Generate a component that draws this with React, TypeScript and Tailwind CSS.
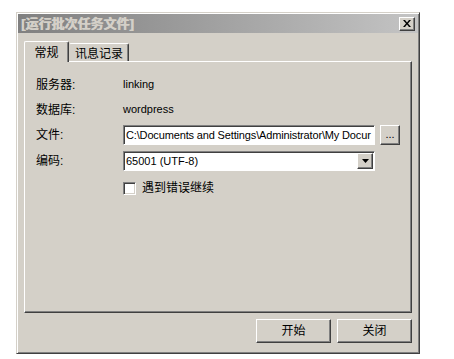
import React from "react";

const font = { fontFamily: '"Liberation Sans", "Noto Sans CJK SC", sans-serif' };

function Bevel({ children, className = "" }: { children?: React.ReactNode; className?: string }) {
    // classic raised 3D button look
    return (
        <div
            className={`bg-[#d4d0c8] border border-t-white border-l-white border-r-[#404040] border-b-[#404040] shadow-[inset_-1px_-1px_0_#808080] flex items-center justify-center ${className}`}
        >
            {children}
        </div>
    );
}

function Field({ children, className = "" }: { children?: React.ReactNode; className?: string }) {
    // sunken edit box
    return (
        <div
            className={`bg-white border border-t-[#808080] border-l-[#808080] border-r-white border-b-white shadow-[inset_1px_1px_0_#404040] flex items-center ${className}`}
        >
            {children}
        </div>
    );
}

export default function App() {
    return (
        <div className="w-[454px] h-[359px] bg-white pl-[16px] pt-[12px] text-[12px] text-black" style={font}>
            <div className="w-[404px] h-[342px] bg-[#d4d0c8] border border-t-[#d4d0c8] border-l-[#d4d0c8] border-r-[#404040] border-b-[#404040] shadow-[inset_1px_1px_0_white,inset_-1px_-1px_0_#808080] p-[1px] flex flex-col">
                {/* Title bar */}
                <div className="h-[19px] bg-gradient-to-r from-[#808080] to-[#c4c4c4] flex items-center justify-between pl-[3px] pr-[3px]">
                    <span className="text-[#d4d0c8] font-bold text-[13px] [text-shadow:0.6px_0_0_#d4d0c8]">[运行批次任务文件]</span>
                    <Bevel className="w-[16px] h-[14px]">
                        <svg width="8" height="7" viewBox="0 0 8 7">
                            <path d="M0 0h2l2 2.5L6 0h2L5 3.5 8 7H6L4 4.5 2 7H0l3-3.5z" fill="black" />
                        </svg>
                    </Bevel>
                </div>

                {/* Tabs */}
                <div className="flex items-end h-[28px] pl-[6px] pt-[9px] relative z-10">
                    <div className="w-[45px] h-[21px] -mb-[1px] bg-[#d4d0c8] border border-t-white border-l-white border-r-[#404040] border-b-0 rounded-t-[2px] shadow-[inset_-1px_0_0_#808080] flex items-start justify-center pt-[2px] text-[12px]">
                        常规
                    </div>
                    <div className="w-[60px] h-[18px] bg-[#d4d0c8] border border-t-white border-l-[#d4d0c8] border-r-[#404040] border-b-0 rounded-t-[2px] shadow-[inset_-1px_0_0_#808080] flex items-start justify-center pt-[1px] text-[12px]">
                        讯息记录
                    </div>
                </div>

                {/* Tab panel */}
                <div className="ml-[6px] w-[388px] h-[252px] border border-t-white border-l-white border-r-[#404040] border-b-[#404040] shadow-[inset_-1px_-1px_0_#808080] pl-[11px] pt-[14px] flex flex-col">
                    <div className="flex items-center h-[17px]">
                        <span className="w-[87px]">服务器:</span>
                        <span className="text-[11px]">linking</span>
                    </div>
                    <div className="flex items-center h-[17px] mt-[8px]">
                        <span className="w-[87px]">数据库:</span>
                        <span className="text-[11px]">wordpress</span>
                    </div>
                    <div className="flex items-center h-[20px] mt-[7px]">
                        <span className="w-[87px]">文件:</span>
                        <Field className="w-[252px] h-[20px] pl-[2px] overflow-hidden whitespace-nowrap text-[11px] tracking-[-0.15px]">
                            C:\Documents and Settings\Administrator\My Docur
                        </Field>
                        <Bevel className="ml-[5px] w-[20px] h-[20px] text-[11px] pb-[2px]">...</Bevel>
                    </div>
                    <div className="flex items-center h-[20px] mt-[6px]">
                        <span className="w-[87px]">编码:</span>
                        <Field className="w-[252px] h-[20px] pl-[2px] pr-[1px] justify-between text-[11px]">
                            <span>65001 (UTF-8)</span>
                            <Bevel className="w-[16px] h-[16px]">
                                <svg width="7" height="4" viewBox="0 0 7 4">
                                    <path d="M0 0h7L3.5 4z" fill="black" />
                                </svg>
                            </Bevel>
                        </Field>
                    </div>
                    <div className="flex items-center h-[14px] mt-[10px] pl-[87px]">
                        <div className="w-[13px] h-[13px] bg-white border border-t-[#808080] border-l-[#808080] border-r-white border-b-white shadow-[inset_1px_1px_0_#404040,inset_-1px_-1px_0_#d4d0c8]" />
                        <span className="ml-[6px]">遇到错误继续</span>
                    </div>
                </div>

                {/* Bottom buttons */}
                <div className="flex justify-end gap-[6px] pr-[6px] pt-[6px]">
                    <Bevel className="w-[75px] h-[24px] text-[12px]">开始</Bevel>
                    <Bevel className="w-[75px] h-[24px] text-[12px]">关闭</Bevel>
                </div>
            </div>
        </div>
    );
}
